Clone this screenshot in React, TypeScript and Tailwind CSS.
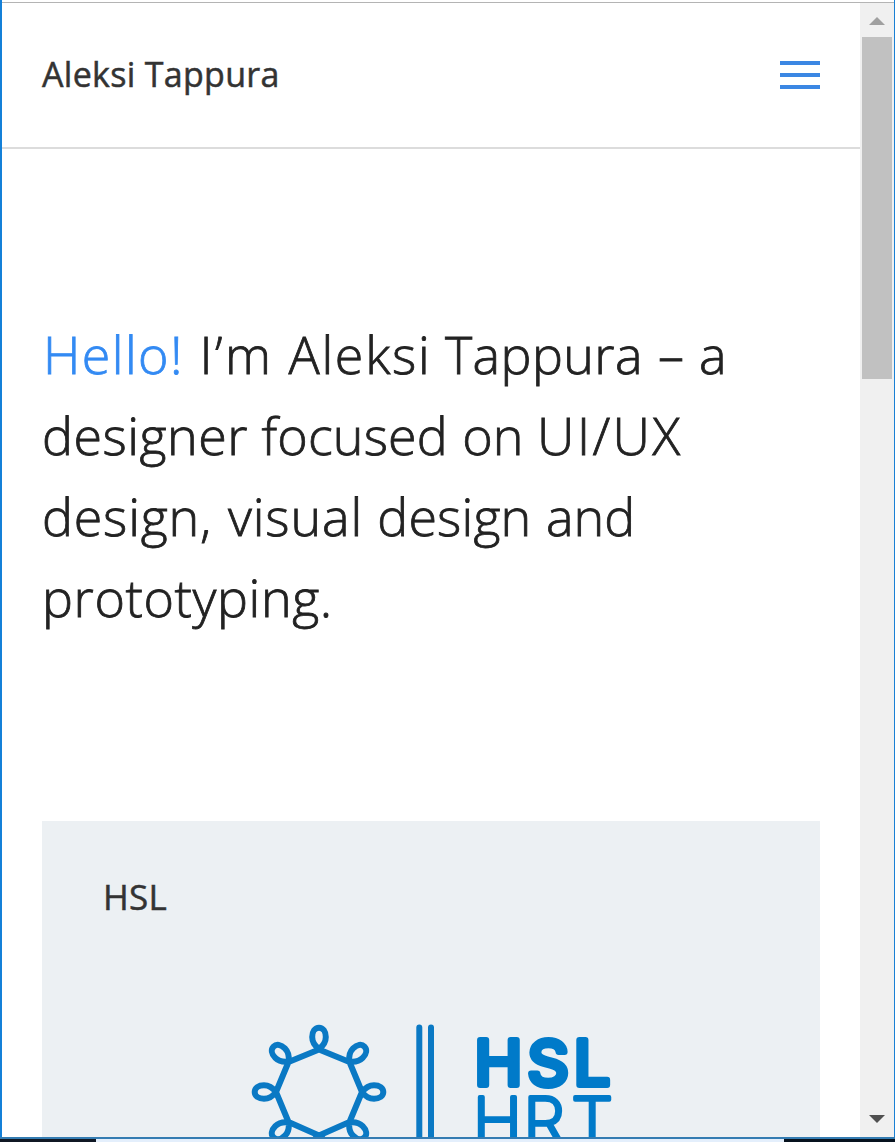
const loops = [0, 45, 90, 135, 180, 225, 270, 315];

function HslLogo() {
  return (
    <svg className="block shrink-0" width="380" height="140" viewBox="240 1010 380 140" fill="none">
      <g transform="translate(319 1092)" stroke="#0a79c4" strokeWidth="6" strokeLinejoin="round">
        <path d="M0 -42.5 L30.5 -30 L43 0 L30.5 30 L0 43.5 L-30.5 30 L-43 0 L-30.5 -30 Z" />
        {loops.map((angle) => (
          <path
            key={angle}
            transform={`rotate(${angle})`}
            d="M0 -43 C-4 -46 -6.8 -50 -6.8 -55 C-6.8 -60.5 -4 -64.3 0 -64.3 C4 -64.3 6.8 -60.5 6.8 -55 C6.8 -50 4 -46 0 -43 Z"
          />
        ))}
      </g>
      <path d="M419.3 1027.500V1150M431 1027.500V1150" stroke="#0a79c4" strokeWidth="6" strokeLinecap="round" />
      <g
        fill="#007ac9"
        stroke="#007ac9"
        strokeLinejoin="round"
        fontFamily="Inter, sans-serif"
        transform="translate(477 0) scale(1.03 1) translate(-477 0)"
      >
        <text y="1085" fontSize="62.500" fontWeight="400" strokeWidth="6" x="474.5 526 571">HSL</text>
        <text y="1144.500" fontSize="65" fontWeight="200" strokeWidth="3.8" x="473 522 568.500">HRT</text>
      </g>
    </svg>
  );
}

function Scrollbar() {
  return (
    <div className="flex w-[34px] shrink-0 flex-col items-center bg-[#f0f0f0]">
      <div className="flex h-[36px] w-full shrink-0 items-center justify-center">
        <svg width="16" height="8" viewBox="0 0 16 8"><path d="M0 8L8 0L16 8Z" fill="#a0a0a0" /></svg>
      </div>
      <div className="-mt-[2px] h-[342px] w-[30px] bg-[#c1c1c1]" />
      <div className="mt-auto flex h-[36px] w-full items-center justify-center">
        <svg width="16" height="8" viewBox="0 0 16 8"><path d="M0 0L8 8L16 0Z" fill="#505050" /></svg>
      </div>
    </div>
  );
}

export default function App() {
  return (
    <div className="flex h-[1142px] w-[895px] flex-col overflow-hidden bg-white font-['Open_Sans',sans-serif] text-[#222]">
      <div className="flex h-[1137px] shrink-0 border-r border-l-2 border-r-[#1a80d4] border-l-[#1480d8]">
        <div className="flex min-w-0 flex-1 flex-col pt-[2px]">
          <div className="h-px shrink-0 bg-[#b4b4b4]" />
          <div className="flex min-h-0 flex-1">
            <main className="flex min-w-0 flex-1 flex-col overflow-hidden">
              <header className="flex h-[146px] shrink-0 items-center justify-between border-b-2 border-[#dcdcdc] pr-10 pl-10">
                <span className="pb-[3px] text-[34px] leading-[48px] font-medium tracking-[0.3px] whitespace-nowrap text-[#333] [-webkit-text-stroke:0.5px_#333]">Aleksi Tappura</span>
                <button aria-label="Menu" className="flex w-10 flex-col gap-2">
                  <span className="h-1 bg-[#3b87e3]" />
                  <span className="h-1 bg-[#3b87e3]" />
                  <span className="h-1 bg-[#3b87e3]" />
                </button>
              </header>
              <h1 className="mt-[164px] ml-10 shrink-0 text-[52px] leading-[81px] font-light whitespace-nowrap [-webkit-text-stroke:0.8px_currentColor]">
                <span className="block">
                  <span className="ml-px tracking-[1.4px] text-[#338af3]">Hello!</span>{' '}
                  <span className="ml-[2px] tracking-[2.5px]">I’m</span>{' '}
                  <span className="ml-[1.5px] tracking-[1.7px]">Aleksi</span>{' '}
                  <span className="tracking-[0.4px]">Tappura</span>{' '}
                  <span className="ml-[1.5px]">–</span>{' '}
                  <span className="ml-[1.5px]">a</span>
                </span>
                <span className="block">
                  <span className="tracking-[0.5px]">designer</span>{' '}
                  <span className="tracking-[0.15px]">focused</span>{' '}
                  <span className="ml-px">on</span>{' '}
                  <span className="tracking-[2.4px]">UI/UX</span>
                </span>
                <span className="block">
                  <span className="tracking-[0.8px]">design,</span>{' '}
                  <span className="ml-[2.4px] tracking-[0.9px]">visual</span>{' '}
                  <span className="ml-[0.6px] tracking-[0.15px]">design</span>{' '}
                  <span className="ml-px">and</span>
                </span>
                <span className="block tracking-[0.6px]">prototyping.</span>
              </h1>
              <section className="mx-10 mt-[184px] flex h-[400px] shrink-0 flex-col bg-[#ecf0f3] pt-[51px]">
                <h2 className="ml-[61px] text-[35px] leading-[50px] font-medium tracking-[0.3px] text-[#333] [-webkit-text-stroke:0.5px_#333]">HSL</h2>
                <div className="mt-[88px] ml-[198px]"><HslLogo /></div>
              </section>
            </main>
            <Scrollbar />
          </div>
        </div>
      </div>
      <div className="h-[2px] shrink-0 bg-[#347cb2]" />
      <div className="flex h-[3px] shrink-0">
        <div className="w-24 bg-[#101824]" />
        <div className="flex-1 bg-[#e4effc]" />
        <div className="w-[111px] bg-[#07121e]" />
      </div>
    </div>
  );
}
